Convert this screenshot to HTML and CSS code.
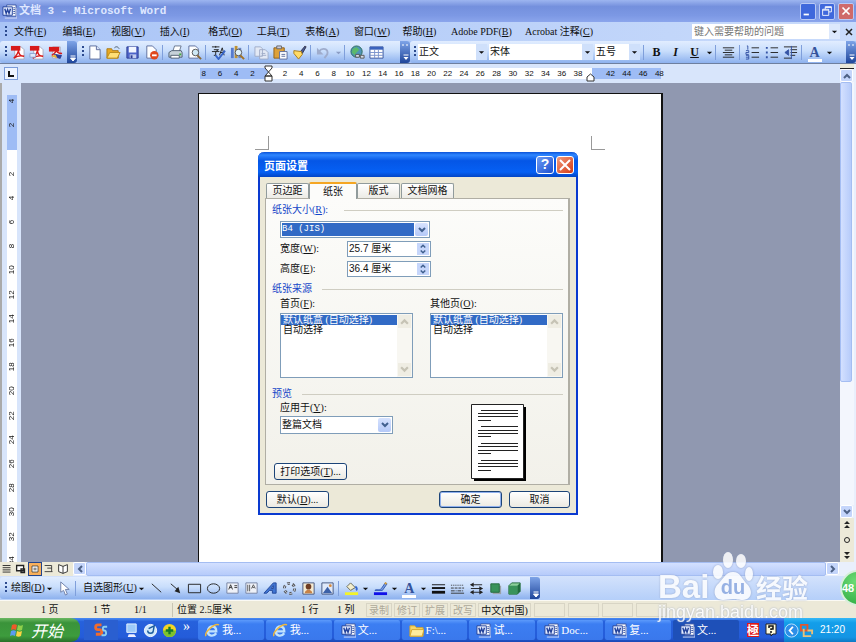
FILE: index.html
```html
<!DOCTYPE html>
<html lang="zh-CN">
<head>
<meta charset="utf-8">
<title>文档 3 - Microsoft Word</title>
<link rel="stylesheet" href="styles.css">
</head>
<body>
<svg class="defs" aria-hidden="true">
  <symbol id="word" viewBox="0 0 16 16"><path d="M5 1h10v12H5z" fill="#fff" stroke="#3a55a5"/><path d="M12 4h2M12 6h2M12 8h2M12 10h2" stroke="#3a55a5"/><path d="M1 3h10v9H1z" fill="#e4ecff" stroke="#23429a"/><path d="M3 5l1.500 5L6 6l1.500 4L9 5" fill="none" stroke="#23429a" stroke-width="1.500"/><path d="M3 15h13V4" fill="none" stroke="#d7def5"/></symbol>
  <symbol id="pdf" viewBox="0 0 16 16"><path d="M5 2h7l3 3v10H5z" fill="#fff" stroke="#aab"/><path d="M1 1h10v5H1z" fill="#d71a1a"/><path d="M4 14c3-3 5-6 5-9 0 4 2 7 6 7-3-1-8 0-11 2z" fill="none" stroke="#d71a1a" stroke-width="1.500"/></symbol>
  <symbol id="pdfm" viewBox="0 0 16 16"><path d="M5 2h7l3 3v10H5z" fill="#fff" stroke="#aab"/><path d="M1 1h10v5H1z" fill="#d71a1a"/><path d="M4 14c3-3 5-6 5-9 0 4 2 7 6 7-3-1-8 0-11 2z" fill="none" stroke="#d71a1a" stroke-width="1.500"/><path d="M1 9h6v4H1z" fill="#dfeafc" stroke="#8da4cf"/></symbol>
  <symbol id="pdfr" viewBox="0 0 16 16"><path d="M5 2h8v12H5z" fill="#fff" stroke="#aab"/><path d="M1 2h11v5H1z" fill="#d71a1a"/><path d="M4 11c3-2 5-4 5-6 0 3 2 4 6 4" fill="none" stroke="#d71a1a" stroke-width="1.500"/><path d="M6 9l9 2-2 4-5-2z" fill="#2c3f9a"/><path d="M3 12l5-2 2 4z" fill="#e6b23c"/></symbol>
  <symbol id="new" viewBox="0 0 16 16"><path d="M3 1h7l4 4v10H3z" fill="#fff" stroke="#5c6d9c"/><path d="M10 1v4h4" fill="#dce5fa" stroke="#5c6d9c"/></symbol>
  <symbol id="open" viewBox="0 0 16 16"><path d="M1 4h5l1 2h6v8H1z" fill="#e8a823" stroke="#a97a16"/><path d="M1 14l3-6h11l-3 6z" fill="#ffdf75" stroke="#b98a1d"/><path d="M9 3c2-2 4-1 5 1" fill="none" stroke="#456"/></symbol>
  <symbol id="save" viewBox="0 0 16 16"><path d="M2 2h12v12H2z" fill="#4d63c8" stroke="#2c3c93"/><path d="M4 2h8v6H4z" fill="#f2f6ff"/><path d="M5 10h7v4H5z" fill="#c3cdee"/><path d="M6 11h2v3H6z" fill="#2c3c93"/></symbol>
  <symbol id="perm" viewBox="0 0 16 16"><path d="M3 1h6l4 4v9H3z" fill="#fff" stroke="#5c6d9c"/><circle cx="11" cy="11" r="4.500" fill="#e0491f"/><path d="M8.500 11h5" stroke="#fff" stroke-width="2"/></symbol>
  <symbol id="print" viewBox="0 0 16 16"><path d="M5 7l2-6h7l-2 6z" fill="#fff" stroke="#66758e"/><path d="M1 8l3-2h10l1 2v5H1z" fill="#c7d2d9" stroke="#4f5f70"/><path d="M3 11h9v3H3z" fill="#fff" stroke="#4f5f70"/><path d="M12 9h2v2h-2z" fill="#3fae3f"/></symbol>
  <symbol id="preview" viewBox="0 0 16 16"><path d="M2 1h7l3 3v10H2z" fill="#fff" stroke="#5c6d9c"/><circle cx="9" cy="8" r="3.500" fill="#cfe9f5" stroke="#555"/><path d="M11 11l4 4" stroke="#8a6a39" stroke-width="2"/></symbol>
  <symbol id="spell" viewBox="0 0 16 16"><path d="M1 2h8M5 1v2M3 5h5L5 7v4H3M1 7h8M9 11l3-8 2 8M10 8h4" fill="none" stroke="#222"/><path d="M5 11l3 4 7-9" fill="none" stroke="#3765c8" stroke-width="2"/></symbol>
  <symbol id="research" viewBox="0 0 16 16"><path d="M1 3h3v11H1z" fill="#567bce"/><path d="M5 1h3v13H5z" fill="#be9234"/><path d="M9 3h3v11H9z" fill="#6a87c6"/><circle cx="9" cy="8" r="3.500" fill="#dff1fa" stroke="#555"/><path d="M11 11l4 4" stroke="#a47221" stroke-width="2"/></symbol>
  <symbol id="copy" viewBox="0 0 16 16"><path d="M1 2h6l2 2v8H1zM6 5h6l3 3v7H6z" fill="#e3e9f5" stroke="#a0acc8"/><path d="M8 9h4M8 11h5" stroke="#a0acc8"/></symbol>
  <symbol id="paste" viewBox="0 0 16 16"><path d="M1 3h11v11H1z" fill="#dda13a" stroke="#906019"/><path d="M4 1h5v3H4z" fill="#ccd" stroke="#666"/><path d="M7 7h8v8H7z" fill="#fff" stroke="#5c6d9c"/><path d="M9 10h4M9 12h4" stroke="#5c6d9c"/></symbol>
  <symbol id="brush" viewBox="0 0 16 16"><path d="M9 7l5-6 1 1-4 7z" fill="#445a9e" stroke="#334"/><path d="M2 6l8 1 1 3-4 5-5-6z" fill="#ffdb66" stroke="#a97a16"/></symbol>
  <symbol id="undo" viewBox="0 0 16 16"><path d="M3 7c4-5 11-3 9 3l-3 4" fill="none" stroke="#9faccc" stroke-width="2"/><path d="M1 3v7h7z" fill="#9faccc"/></symbol>
  <symbol id="link" viewBox="0 0 16 16"><circle cx="7" cy="7" r="6" fill="#4f94b9" stroke="#2b6a55"/><path d="M3 4l4-2 3 3-3 3-2 3-3-3z" fill="#5cb96a"/><path d="M6 10h4v3H6zM11 11h4v3h-4z" fill="#d7dde9" stroke="#555"/></symbol>
  <symbol id="table" viewBox="0 0 16 16"><path d="M1 2h14v12H1z" fill="#fff" stroke="#36539c"/><path d="M1 2h14v3H1z" fill="#3a62bd"/><path d="M1 8h14M1 11h14M6 5v9M10 5v9" stroke="#7b93cc"/></symbol>
  <symbol id="center" viewBox="0 0 16 16"><path d="M2 3h12M4 5.500h8M2 8h12M4 10.500h8M2 13h12" stroke="#222"/></symbol>
  <symbol id="numlist" viewBox="0 0 16 16"><path d="M7 3h8M7 8h8M7 13h8" stroke="#222"/><path d="M2 1h1v4M1 6h3v2H1v2h3M1 11h3v4H1M1 13h3" fill="none" stroke="#3554a5"/></symbol>
  <symbol id="bullist" viewBox="0 0 16 16"><path d="M7 3h8M7 8h8M7 13h8" stroke="#222"/><path d="M2 2h2v2H2zM2 7h2v2H2zM2 12h2v2H2z" fill="#3554a5"/></symbol>
  <symbol id="indent" viewBox="0 0 16 16"><path d="M1 2h14M8 5h7M8 8h7M8 11h5M1 14h8" stroke="#222"/><path d="M6 5v6L2 8zM9 1v14" fill="#3554a5" stroke="#3554a5"/></symbol>
  <symbol id="up" viewBox="0 0 8 8"><path d="M1 6l3-3 3 3" fill="none" stroke="currentColor" stroke-width="2"/></symbol>
  <symbol id="down" viewBox="0 0 8 8"><path d="M1 2l3 3 3-3" fill="none" stroke="currentColor" stroke-width="2"/></symbol>
  <symbol id="left" viewBox="0 0 8 8"><path d="M6 1L3 4l3 3" fill="none" stroke="currentColor" stroke-width="2"/></symbol>
  <symbol id="right" viewBox="0 0 8 8"><path d="M2 1l3 3-3 3" fill="none" stroke="currentColor" stroke-width="2"/></symbol>
  <symbol id="tri" viewBox="0 0 8 8"><path d="M1 3h6L4 6z" fill="currentColor"/></symbol>
  <symbol id="cap" viewBox="0 0 9 22"><path d="M3 15h5M3 17h5l-2.500 3z" fill="#fff" stroke="#fff"/></symbol>
  <symbol id="cap2" viewBox="0 0 9 22"><path d="M2 3l1 1-1 1M6 3l1 1-1 1M3 14h5" fill="none" stroke="#fff"/><path d="M3 16h5l-2.500 3z" fill="#fff"/></symbol>
  <symbol id="cursor" viewBox="0 0 16 16"><path d="M4 1v11l3-2 2 5 2-1-2-5h4z" fill="#fff" stroke="#6d7ea8"/></symbol>
  <symbol id="line" viewBox="0 0 16 16"><path d="M3 3l10 9" stroke="#222"/></symbol>
  <symbol id="arrow" viewBox="0 0 16 16"><path d="M3 3l7 6" stroke="#222"/><path d="M13 13L7 11l4-5z" fill="#222"/></symbol>
  <symbol id="rect" viewBox="0 0 16 16"><path d="M1.500 3.500h13v9h-13z" fill="none" stroke="#222"/></symbol>
  <symbol id="oval" viewBox="0 0 16 16"><ellipse cx="8" cy="8" rx="6.500" ry="5" fill="none" stroke="#222"/></symbol>
  <symbol id="tbox" viewBox="0 0 16 16"><path d="M2 2h12v11H2z" fill="#eef1f8" stroke="#7582a2"/><path d="M4 9l2-5 2 5M5 7h2M10 5h3M10 7h3" fill="none" stroke="#333"/></symbol>
  <symbol id="vbox" viewBox="0 0 16 16"><path d="M2 2h12v11H2z" fill="#eef1f8" stroke="#7582a2"/><path d="M4 4v7M6 4v7M8 8l2-4 2 4M9 7h2" fill="none" stroke="#555"/></symbol>
  <symbol id="wart" viewBox="0 0 16 16"><path d="M1 13L11 2h3v11h-4v-3H7l-3 3zM9 8h2V5z" fill="#3f74d2" stroke="#22489a"/></symbol>
  <symbol id="diag" viewBox="0 0 16 16"><circle cx="8" cy="8" r="5.500" fill="none" stroke="#555" stroke-width="3" stroke-dasharray="3 2.700"/><circle cx="8" cy="8" r="5.500" fill="none" stroke="#c9d5ee" stroke-dasharray="3 2.700"/></symbol>
  <symbol id="clip" viewBox="0 0 16 16"><path d="M2 2h12v12H2z" fill="#f4ead2" stroke="#44567e"/><circle cx="8" cy="6" r="3" fill="#6e3d24"/><path d="M4 13c0-5 8-5 8 0z" fill="#c78247"/></symbol>
  <symbol id="pic" viewBox="0 0 16 16"><path d="M2 2h12v12H2z" fill="#dfe9fa" stroke="#44567e"/><path d="M3 13l5-7 5 7z" fill="#3c61a8"/><circle cx="11" cy="5" r="1.500" fill="#d78a3a"/></symbol>
  <symbol id="fill" viewBox="0 0 16 16"><path d="M3 6l4-4 5 5-5 3z" fill="#f4efcd" stroke="#665"/><path d="M12 6c2 1 2 3 1 4" fill="none" stroke="#36c" stroke-width="2"/><path d="M1 12h14v3H1z" fill="#f3f32a"/></symbol>
  <symbol id="pen" viewBox="0 0 16 16"><path d="M2 10c3-2 4 1 7-2l4-6 2 1-5 7z" fill="#7ba0e0" stroke="#3159b4"/><path d="M12 3l2 1 1-2-2-1z" fill="#d8a13a"/><path d="M1 12h14v3H1z" fill="#1010e8"/></symbol>
  <symbol id="lines" viewBox="0 0 16 16"><path d="M1 4h14" stroke="#111"/><path d="M1 7.500h14" stroke="#111" stroke-width="2"/><path d="M1 12h14" stroke="#111" stroke-width="3"/></symbol>
  <symbol id="dash" viewBox="0 0 16 16"><path d="M1 4.500h14" stroke="#333" stroke-dasharray="1 1"/><path d="M1 7.500h14" stroke="#333" stroke-dasharray="3 1"/><path d="M1 10.500h14" stroke="#333" stroke-dasharray="4 1 1 1"/><path d="M1 13h14" stroke="#333"/></symbol>
  <symbol id="arrs" viewBox="0 0 16 16"><path d="M2 4h12M2 8h12M2 12h12" stroke="#222"/><path d="M5 1.500v5L1 4zM11 5.500v5l4-2.500zM5 9.500v5L1 12zM11 9.500v5l4-2.500z" fill="#222"/></symbol>
  <symbol id="shadow" viewBox="0 0 16 16"><path d="M5 5h9v9H5z" fill="#9aa2a8"/><path d="M3 3h9v9H3z" fill="#39935a" stroke="#226b3c"/></symbol>
  <symbol id="cube" viewBox="0 0 16 16"><path d="M2 5l3-3h9v9l-3 3H2z" fill="#8ccf9a" stroke="#226b3c"/><path d="M2 5h9v9H2z" fill="#39935a"/><path d="M11 5l3-3v9l-3 3z" fill="#206d3d"/></symbol>
  <symbol id="ie" viewBox="0 0 16 16"><path d="M3 9h9c0-7-8-7-9 0 0 5 6 6 9 2" fill="none" stroke="#bfe2ff" stroke-width="2.500"/><path d="M1 14c-2-4 9-14 14-12" fill="none" stroke="#f1b93b" stroke-width="1.500"/></symbol>
  <symbol id="folder" viewBox="0 0 16 16"><path d="M1 3h5l2 2h7v9H1z" fill="#f8d768" stroke="#d6a62d"/><path d="M1 14l2-7h13l-2 7z" fill="#ffec9d" stroke="#d6a62d"/></symbol>
</svg>

<header class="titlebar">
  <svg class="i"><use href="#word"/></svg>
  <h1>文档 3 - Microsoft Word</h1>
  <div class="winbtns">
    <button aria-label="最小化"><svg viewBox="0 0 16 16"><path d="M3 11h6v2H3z" fill="#fff"/></svg></button>
    <button aria-label="还原"><svg viewBox="0 0 16 16"><path d="M6 6V3h7v6h-3M3 6h7v7H3zM3 7h7M6 4h7" fill="none" stroke="#fff"/></svg></button>
    <button class="close" aria-label="关闭"><svg viewBox="0 0 16 16"><path d="M4 4l8 8M12 4l-8 8" stroke="#fff" stroke-width="2"/></svg></button>
  </div>
</header>

<nav class="menubar">
  <span class="grip"></span>
  <div class="menus">
    <button>文件(<u>F</u>)</button><button>编辑(<u>E</u>)</button><button>视图(<u>V</u>)</button><button>插入(<u>I</u>)</button><button>格式(<u>O</u>)</button><button>工具(<u>T</u>)</button><button>表格(<u>A</u>)</button><button>窗口(<u>W</u>)</button><button>帮助(<u>H</u>)</button>
  </div>
  <button class="wide">Adobe PDF(<u>B</u>)</button><button>Acrobat 注释(<u>C</u>)</button>
  <div class="ask"><input aria-label="帮助问题" placeholder="键入需要帮助的问题"><svg class="s"><use href="#tri"/></svg></div>
  <button class="docx" aria-label="关闭文档"><svg viewBox="0 0 8 8"><path d="M1 1l6 6M7 1L1 7" stroke="#222" stroke-width="1.500"/></svg></button>
</nav>

<div class="toolbar">
  <div class="tb tb-pdf">
    <span class="grip"></span>
    <button aria-label="PDF"><svg class="i"><use href="#pdf"/></svg></button><button aria-label="PDF 邮件"><svg class="i"><use href="#pdfm"/></svg></button><button aria-label="PDF 审阅"><svg class="i"><use href="#pdfr"/></svg></button>
    <svg class="cap"><use href="#cap"/></svg>
  </div>
  <div class="tb tb-std">
    <span class="grip"></span>
    <button aria-label="新建"><svg class="i"><use href="#new"/></svg></button><button aria-label="打开"><svg class="i"><use href="#open"/></svg></button><button aria-label="保存"><svg class="i"><use href="#save"/></svg></button><button aria-label="权限"><svg class="i"><use href="#perm"/></svg></button>
    <i class="sep"></i>
    <button aria-label="打印"><svg class="i"><use href="#print"/></svg></button><button aria-label="打印预览"><svg class="i"><use href="#preview"/></svg></button>
    <i class="sep"></i>
    <button aria-label="拼写"><svg class="i"><use href="#spell"/></svg></button><button aria-label="信息检索"><svg class="i"><use href="#research"/></svg></button>
    <i class="sep"></i>
    <button aria-label="复制"><svg class="i"><use href="#copy"/></svg></button><button aria-label="粘贴"><svg class="i"><use href="#paste"/></svg></button><button aria-label="格式刷"><svg class="i"><use href="#brush"/></svg></button>
    <i class="sep"></i>
    <button aria-label="撤消"><svg class="i"><use href="#undo"/></svg></button><button class="dd dim" aria-label="撤消列表"><svg class="s"><use href="#tri"/></svg></button>
    <i class="sep"></i>
    <button aria-label="超链接"><svg class="i"><use href="#link"/></svg></button><button aria-label="表格"><svg class="i"><use href="#table"/></svg></button>
    <svg class="cap"><use href="#cap2"/></svg>
  </div>
  <div class="tb tb-fmt">
    <span class="grip"></span>
    <div class="combo c-style"><select aria-label="样式"><option>正文</option></select><svg class="s"><use href="#tri"/></svg></div>
    <div class="combo c-font"><select aria-label="字体"><option>宋体</option></select><svg class="s"><use href="#tri"/></svg></div>
    <div class="combo c-size"><select aria-label="字号"><option>五号</option></select><svg class="s"><use href="#tri"/></svg></div>
    <i class="sep"></i>
    <button class="g"><b>B</b></button><button class="g"><em>I</em></button><button class="g"><u>U</u></button><button class="dd" aria-label="下划线样式"><svg class="s"><use href="#tri"/></svg></button>
    <i class="sep"></i>
    <button aria-label="居中"><svg class="i"><use href="#center"/></svg></button>
    <i class="sep"></i>
    <button aria-label="编号"><svg class="i"><use href="#numlist"/></svg></button><button aria-label="项目符号"><svg class="i"><use href="#bullist"/></svg></button><button aria-label="缩进"><svg class="i"><use href="#indent"/></svg></button>
    <i class="sep"></i>
    <button class="color">A</button><button class="dd" aria-label="字体颜色"><svg class="s"><use href="#tri"/></svg></button>
    <svg class="cap"><use href="#cap2"/></svg>
  </div>
</div>

<main class="work">
  <div class="canvas">
    <div class="hrow">
      <span class="tabsel"><svg viewBox="0 0 12 11"><path d="M4 3v5h5" fill="none" stroke="#111" stroke-width="2"/></svg></span>
      <div class="hruler">
        <span>8</span><span>6</span><span>4</span><span>2</span><span><svg class="mark" viewBox="0 0 9 17"><path d="M1 1h7v2L4.500 7 1 3zM4.500 7L8 11H1zM1 11h7v5H1z" fill="#fff" stroke="#333"/></svg></span><span>2</span><span>4</span><span>6</span><span>8</span><span>10</span><span>12</span><span>14</span><span>16</span><span>18</span><span>20</span><span>22</span><span>24</span><span>26</span><span>28</span><span>30</span><span>32</span><span>34</span><span>36</span><span>38</span><span class="rt"><svg class="mark" viewBox="0 0 9 17"><path d="M1 16v-4l3.500-3L8 12v4z" fill="#fff" stroke="#333"/></svg></span><span>42</span><span>44</span><span>46</span><span>48</span>
      </div>
    </div>
    <div class="vrow">
      <div class="vruler">
        <div class="vnums"><span>4</span><span>2</span><span></span><span>2</span><span>4</span><span>6</span><span>8</span><span>10</span><span>12</span><span>14</span><span>16</span><span>18</span><span>20</span><span>22</span><span>24</span><span>26</span><span>28</span><span>30</span><span>32</span><span>34</span></div>
      </div>
      <div class="desk"><div class="sheet"><i class="crop tl"></i><i class="crop tr"></i></div></div>
    </div>
  </div>
  <div class="vscroll">
    <i class="split"></i>
    <button aria-label="向上"><svg class="s"><use href="#up"/></svg></button>
    <div class="vtrack"><div class="vthumb"></div></div>
    <button aria-label="向下"><svg class="s"><use href="#down"/></svg></button>
    <div class="browse"><svg viewBox="0 0 8 10"><path d="M1 4l3-3 3 3zM1 8l3-3 3 3z" fill="#222"/></svg><svg viewBox="0 0 8 10"><circle cx="4" cy="5" r="2.500" fill="none" stroke="#222"/></svg><svg viewBox="0 0 8 10"><path d="M1 2l3 3 3-3zM1 6l3 3 3-3z" fill="#222"/></svg></div>
  </div>

  <section class="dialog" role="dialog" aria-labelledby="dt">
    <header><h2 id="dt">页面设置</h2><button aria-label="帮助">?</button><button class="close" aria-label="关闭"><svg viewBox="0 0 16 16"><path d="M3 3l10 10M13 3L3 13" stroke="#fff" stroke-width="2"/></svg></button></header>
    <div class="dbody">
      <div class="tabs" role="tablist"><button role="tab">页边距</button><button role="tab" class="on" aria-selected="true">纸张</button><button role="tab">版式</button><button role="tab">文档网格</button></div>
      <div class="panel">
        <div class="sect first"><label for="psize">纸张大小(<u>R</u>):</label><i></i></div>
        <div class="xp psize"><select id="psize"><option>B4 (JIS)</option></select><span><svg class="s"><use href="#down"/></svg></span></div>
        <div class="field"><label for="w">宽度(<u>W</u>):</label><div class="spin"><input id="w" value="25.7 厘米"><span><svg class="s"><use href="#up"/></svg><svg class="s"><use href="#down"/></svg></span></div></div>
        <div class="field"><label for="h">高度(<u>E</u>):</label><div class="spin"><input id="h" value="36.4 厘米"><span><svg class="s"><use href="#up"/></svg><svg class="s"><use href="#down"/></svg></span></div></div>
        <div class="sect"><span>纸张来源</span><i></i></div>
        <div class="lists">
          <div><span id="l1">首页(<u>F</u>):</span><div class="lb"><ul role="listbox" aria-labelledby="l1"><li role="option" aria-selected="true">默认纸盒 (自动选择)</li><li role="option">自动选择</li></ul><div class="sb"><svg class="s"><use href="#up"/></svg><svg class="s"><use href="#down"/></svg></div></div></div>
          <div><span id="l2">其他页(<u>O</u>):</span><div class="lb"><ul role="listbox" aria-labelledby="l2"><li role="option" aria-selected="true">默认纸盒 (自动选择)</li><li role="option">自动选择</li></ul><div class="sb"><svg class="s"><use href="#up"/></svg><svg class="s"><use href="#down"/></svg></div></div></div>
        </div>
        <div class="sect prev"><span>预览</span><i></i></div>
        <div class="apply">
          <div class="acol">
            <label for="ap">应用于(<u>Y</u>):</label>
            <div class="xp ap"><select id="ap"><option>整篇文档</option></select><span><svg class="s"><use href="#down"/></svg></span></div>
            <button class="btn popt">打印选项(<u>T</u>)...</button>
          </div>
          <svg class="mini" viewBox="0 0 55 77"><path d="M3 3h52v74H3z" fill="#000"/><path d="M.5.5h52v74H.5z" fill="#fff" stroke="#222"/><path d="M10 6.500h37M7 9.500h40M7 12.500h40M7 16.500h13M10 22.500h37M7 26.500h40M7 29.500h40M7 32.500h13M10 39.500h37M7 42.500h40M7 46.500h40M7 49.500h13M10 56.500h37M7 59.500h40M7 62.500h40M7 66.500h13" stroke="#222"/></svg>
        </div>
      </div>
      <footer><button class="btn">默认(<u>D</u>)...</button><button class="btn ok">确定</button><button class="btn cancel">取消</button></footer>
    </div>
  </section>
</main>

<div class="hscroll">
  <div class="views">
    <svg viewBox="0 0 16 16"><path d="M3 4h9M3 6.500h9M3 9h9M3 11.500h9" stroke="#222"/></svg><svg viewBox="0 0 16 16"><path d="M3 4h8v6H3zM8 8h4v4H8z" fill="#fff" stroke="#222" stroke-width="1.500"/></svg><svg class="on" viewBox="0 0 16 16"><path d="M4 4h8v8H4z" fill="#fff" stroke="#333"/><path d="M6 7h4M6 9h4" stroke="#333"/></svg><svg viewBox="0 0 16 16"><path d="M3 4h8M6 7h5M3 11h9M11 4v7" stroke="#333"/></svg><svg viewBox="0 0 16 16"><path d="M8 5v8M8 5L3 3v8l5 2 5-2V3z" fill="#fff" stroke="#222"/></svg>
  </div>
  <button aria-label="向左"><svg class="s"><use href="#left"/></svg></button>
  <div class="hthumb"></div>
  <button aria-label="向右"><svg class="s"><use href="#right"/></svg></button>
</div>

<div class="drawbar">
  <div class="tb tb-draw">
    <span class="grip"></span>
    <button class="t">绘图(<u>D</u>)</button><button class="dd" aria-label="绘图菜单"><svg class="s"><use href="#tri"/></svg></button><button aria-label="选择"><svg class="i"><use href="#cursor"/></svg></button>
    <i class="sep"></i>
    <button class="t">自选图形(<u>U</u>)</button><button class="dd" aria-label="图形菜单"><svg class="s"><use href="#tri"/></svg></button>
    <button aria-label="直线"><svg class="i"><use href="#line"/></svg></button><button aria-label="箭头"><svg class="i"><use href="#arrow"/></svg></button><button aria-label="矩形"><svg class="i"><use href="#rect"/></svg></button><button aria-label="椭圆"><svg class="i"><use href="#oval"/></svg></button><button aria-label="文本框"><svg class="i"><use href="#tbox"/></svg></button><button aria-label="竖排文本框"><svg class="i"><use href="#vbox"/></svg></button><button aria-label="艺术字"><svg class="i"><use href="#wart"/></svg></button><button aria-label="图示"><svg class="i"><use href="#diag"/></svg></button><button aria-label="剪贴画"><svg class="i"><use href="#clip"/></svg></button><button aria-label="图片"><svg class="i"><use href="#pic"/></svg></button>
    <i class="sep"></i>
    <button aria-label="填充"><svg class="i"><use href="#fill"/></svg></button><button class="dd" aria-label="填充颜色"><svg class="s"><use href="#tri"/></svg></button><button aria-label="线条"><svg class="i"><use href="#pen"/></svg></button><button class="dd" aria-label="线条颜色"><svg class="s"><use href="#tri"/></svg></button><button class="color">A</button><button class="dd" aria-label="文字颜色"><svg class="s"><use href="#tri"/></svg></button>
    <button aria-label="线型"><svg class="i"><use href="#lines"/></svg></button><button aria-label="虚线"><svg class="i"><use href="#dash"/></svg></button><button aria-label="箭头样式"><svg class="i"><use href="#arrs"/></svg></button><button aria-label="阴影"><svg class="i"><use href="#shadow"/></svg></button><button aria-label="三维"><svg class="i"><use href="#cube"/></svg></button>
    <svg class="cap"><use href="#cap"/></svg>
  </div>
</div>

<div class="status">
  <span class="p1">1 页</span><span class="p2">1 节</span><span class="p3">1/1</span><span class="p4">位置 2.5厘米</span><span class="p5">1 行</span><span class="p6">1 列</span>
  <span class="m">录制</span><span class="m">修订</span><span class="m">扩展</span><span class="m">改写</span><span class="lang">中文(中国)</span><span class="e"></span><span class="e"></span><span class="e"></span><span class="e"></span>
</div>

<footer class="taskbar">
  <button class="start"><svg viewBox="0 0 16 16"><path d="M2 3c2-1 3-1 5 0L6 8c-2-1-3-1-5 0z" fill="#ee5a2a"/><path d="M8 3c2 1 3 1 5 0l-1 5c-2 1-3 1-5 0z" fill="#8fd04b"/><path d="M1 9c2-1 3-1 5 0l-1 5c-2-1-3-1-5 0z" fill="#5a9bf0"/><path d="M7 9c2 1 3 1 5 0l-1 5c-2 1-3 1-5 0z" fill="#fbd442"/></svg>开始</button>
  <div class="quick">
    <button class="big" aria-label="输入法"><svg class="i" viewBox="0 0 16 16"><path d="M8 2H4c-3 0-3 5 0 5h2c3 0 3 5 0 5H2" fill="none" stroke="#f26b2c" stroke-width="3"/><path d="M14 4h-3c-2 0-2 4 0 4s3 5 0 5H8" fill="none" stroke="#8bd0f0" stroke-width="2"/></svg></button>
    <button aria-label="显示桌面"><svg class="i" viewBox="0 0 16 16"><path d="M3 1h10v9H3z" fill="#9ccaf9" stroke="#e8f3ff"/><path d="M5 12h6l2 3H4z" fill="#eef"/></svg></button><button aria-label="播放器"><svg class="i" viewBox="0 0 16 16"><circle cx="8" cy="8" r="6.500" fill="#cfe8fb" stroke="#fff"/><path d="M5 8a3 3 0 106 0M6 6l6-3-1 5" fill="none" stroke="#1a5b9e" stroke-width="1.500"/></svg></button><button aria-label="安全卫士"><svg class="i" viewBox="0 0 16 16"><circle cx="8" cy="8" r="7" fill="#f3d526"/><path d="M1 8a7 7 0 0014 0z" fill="#7dc32d"/><path d="M8 4v8M4 8h8" stroke="#147a2a" stroke-width="2.500"/></svg></button><span>»</span>
  </div>
  <div class="tasks">
    <button><svg class="i"><use href="#ie"/></svg>我...</button><button><svg class="i"><use href="#ie"/></svg>我...</button><button><svg class="i"><use href="#word"/></svg>文...</button><button><svg class="i"><use href="#folder"/></svg>F:\...</button><button><svg class="i"><use href="#word"/></svg>试...</button><button><svg class="i"><use href="#word"/></svg>Doc...</button><button><svg class="i"><use href="#word"/></svg>复...</button><button class="on"><svg class="i"><use href="#word"/></svg>文...</button>
  </div>
  <div class="ime"><span>極</span><svg viewBox="0 0 12 14"><path d="M1 1h10v10H8l-2 2v-2H1z" fill="#fffbe0" stroke="#222"/><path d="M4 5V3h4v3H6v1M6 8v2" fill="none" stroke="#111" stroke-width="1.500"/></svg></div>
  <div class="tray"><svg class="i" viewBox="0 0 16 16"><circle cx="8" cy="8" r="7" fill="#2d8fe8" stroke="#bfe4ff"/><path d="M9.500 4L6 8l3.500 4" fill="none" stroke="#fff" stroke-width="2"/></svg><svg class="i" viewBox="0 0 16 16"><path d="M2 2h7v6H2z" fill="none" stroke="#e2572e" stroke-width="2"/><path d="M5 6v8h8M9 8h5v4" fill="none" stroke="#e8c07a" stroke-width="2"/></svg><time>21:20</time></div>
</footer>

<div class="wm" aria-hidden="true">
  <div class="wm-row"><b>Bai</b>
    <div class="paw"><svg viewBox="0 0 40 50"><g fill="#fff"><ellipse cx="5" cy="20" rx="5" ry="7"/><ellipse cx="15" cy="8" rx="5" ry="8"/><ellipse cx="28" cy="9" rx="5" ry="7"/><ellipse cx="36" cy="22" rx="4" ry="7"/><path d="M20 20c8 0 9 8 15 13 6 8 2 15-5 15-5 0-6-1-10-1s-6 1-10 1c-8 0-11-8-6-15 6-5 8-13 16-13z"/></g></svg><span>du</span></div>
    <strong>经验</strong></div>
  <div class="wm-url">jingyan.baidu.com</div>
</div>
<div class="ball">48</div>
</body>
</html>
```
FILE: styles.css
```css
* { box-sizing: border-box; }
body {
  margin: 0;
  min-height: 100vh;
  display: flex;
  flex-direction: column;
  position: relative;
  overflow: hidden;
  font: 10px/14px "Liberation Serif", "Noto Sans CJK SC", serif;
  color: #111;
  background: #d9e6fc;
}
button, input, select {
  font: inherit;
  color: inherit;
  margin: 0;
  padding: 0;
  border: 0;
  background: none;
  border-radius: 0;
}
button { white-space: nowrap; }
svg { display: block; flex: none; }
h1, h2, ul { margin: 0; padding: 0; list-style: none; }
.defs { position: absolute; width: 0; height: 0; }
.i { width: 15px; height: 15px; }
.s { width: 8px; height: 8px; }

.titlebar {
  height: 22px;
  flex: none;
  display: flex;
  align-items: center;
  padding: 0 2px;
  background: linear-gradient(#9db5f0, #7490dd 30%, #7c98e4 70%, #8ba5ec);
}
.titlebar h1 {
  flex: 1;
  margin-left: 2px;
  color: #dfe7ff;
  font: bold 11px/20px "Liberation Mono", "Noto Sans CJK SC", monospace;
}
.winbtns { display: flex; gap: 3px; }
.winbtns button {
  width: 16px;
  height: 17px;
  border: 1px solid #b9c9f5;
  border-radius: 2px;
  background: #3f68dc;
}
.winbtns .close { background: #cf6a6a; }

.menubar {
  height: 19px;
  flex: none;
  display: flex;
  align-items: center;
  padding: 0 3px 0 5px;
  background: linear-gradient(90deg, #a9c4f6, #c9dbfb);
}
.grip {
  width: 2px;
  height: 12px;
  flex: none;
  background: repeating-linear-gradient(#2c4a8e 0 2px, transparent 2px 4px);
}
.menus {
  display: grid;
  grid-template-columns: repeat(9, 1fr);
  width: 437px;
  margin-left: 7px;
}
.menubar button { text-align: left; }
.menubar .wide { width: 74px; }
.ask {
  display: flex;
  align-items: center;
  width: 148px;
  height: 15px;
  margin-left: auto;
  background: #fff;
}
.ask input { flex: 1; min-width: 0; padding-left: 2px; }
.ask input::placeholder { color: #777; opacity: 1; }
.ask .s { width: 11px; padding: 2px; background: #dce8fc; height: 15px; }
.menubar .docx { width: 8px; height: 8px; margin-left: 5px; }

.toolbar, .drawbar {
  flex: none;
  display: flex;
  background: #a9c5f8;
}
.toolbar { height: 23px; border-bottom: 1px solid #6e7f9f; }
.tb {
  display: flex;
  align-items: center;
  height: 22px;
  background: linear-gradient(#e1edff, #c9defc 45%, #8db1ee);
  border-radius: 3px;
}
.tb > button {
  width: 19px;
  height: 20px;
  flex: none;
  display: flex;
  align-items: center;
  justify-content: center;
}
.tb > button.dd { width: 10px; }
.tb > button.dd .s { width: 7px; height: 7px; }
.tb > button.dim { color: #8b9cc4; }
.tb > button.t { width: auto; }
.tb > button.g { font-size: 12px; font-weight: bold; }
.tb > .color {
  font: bold 14px/13px "Liberation Serif", serif;
  color: #34539b;
}
.color { background: linear-gradient(#fff, #fff) 50% 17px / 14px 3px no-repeat; }
.sep { width: 5px; height: 15px; flex: none; border-left: 1px solid #7f9fdb; margin-left: 1px; margin-right: -1px; }
.cap {
  width: 10px;
  height: 22px;
  margin-left: auto;
  background: linear-gradient(#7ea4e8, #1f469b);
  border-radius: 0 3px 3px 0;
}
.tb-pdf { width: 77px; padding-left: 5px; }
.tb-std { width: 333px; padding-left: 5px; }
.tb-fmt { flex: 1; padding-left: 4px; }
.tb-std .grip, .tb-pdf .grip { margin-right: 1px; }
.combo {
  position: relative;
  height: 16px;
  margin-left: 2px;
  background: #fff;
}
.combo select, .xp select {
  width: 100%;
  height: 100%;
  display: block;
  appearance: none;
  padding-left: 1px;
}
.combo .s {
  position: absolute;
  right: 0;
  top: 0;
  width: 11px;
  height: 16px;
  padding: 2px;
  background: #cfe0fb;
  pointer-events: none;
}
.c-style { width: 69px; }
.c-font { width: 104px; }
.c-size { width: 45px; margin-right: 2px; }

.work {
  flex: 1;
  min-height: 0;
  display: flex;
  position: relative;
}
.canvas { flex: 1; display: flex; flex-direction: column; }
.hrow {
  height: 19px;
  flex: none;
  position: relative;
  display: flex;
  justify-content: center;
  align-items: center;
  padding-left: 23px;
  background: #d8e5fb;
}
.tabsel {
  position: absolute;
  left: 4px;
  top: 3px;
  width: 14px;
  height: 13px;
  border: 1px solid #7b9cd9;
  background: #eef4ff;
}
.hruler {
  display: grid;
  grid-template-columns: repeat(29, 1fr);
  width: 472px;
  height: 11px;
  font: 8px/11px "Liberation Sans", sans-serif;
  text-align: center;
  background: linear-gradient(90deg, transparent 4px, #9ebcf5 4px 72px, #fff 72px 396px, #9ebcf5 396px 465px, transparent 465px);
}
.mark { width: 9px; height: 17px; margin: -3px auto 0; }
.rt .mark { margin-left: 0; }
.vrow { flex: 1; min-height: 0; display: flex; }
.vruler {
  width: 21px;
  flex: none;
  padding: 6px 4px 0 5px;
  background: #d8e5fb;
  border-left: 2px solid #aaa;
  overflow: hidden;
}
.vnums {
  display: grid;
  grid-template-rows: repeat(20, 1fr);
  height: 484px;
  margin-bottom: -40px;
  justify-content: center;
  font: 8px/10px "Liberation Sans", sans-serif;
  text-align: center;
  background: linear-gradient(#d8e5fb 6px, #9ebcf5 6px 61px, #fff 61px);
}
.vnums span { writing-mode: vertical-rl; transform: rotate(180deg); }
.desk {
  flex: 1;
  display: flex;
  justify-content: center;
  padding-top: 10px;
  background: #9098b0;
}
.sheet {
  position: relative;
  width: 465px;
  background: #fff;
  border: 1px solid #111;
  border-right-width: 2px;
  border-bottom: 0;
}
.crop {
  position: absolute;
  top: 42px;
  width: 14px;
  height: 14px;
  border: 0 solid #999;
  border-bottom-width: 1px;
}
.tl { left: 56px; border-right-width: 1px; }
.tr { right: 56px; border-left-width: 1px; }

.vscroll {
  width: 16px;
  flex: none;
  display: flex;
  flex-direction: column;
  padding-right: 2px;
  background: #e9effc;
}
.split { height: 5px; border-bottom: 1px solid #222; background: #ece9d8; }
.vscroll button, .hscroll button {
  width: 13px;
  height: 13px;
  display: flex;
  align-items: center;
  justify-content: center;
  color: #4d6185;
  border: 1px solid #fff;
  border-radius: 2px;
  background: #c4d5fb;
}
.vtrack { flex: 1; background: #f3f6fd; }
.vthumb {
  width: 12px;
  height: 71%;
  border: 1px solid #a4bdf2;
  border-radius: 2px;
  background: linear-gradient(90deg, #d3e0ff, #b6cbfa);
}
.browse {
  height: 44px;
  display: flex;
  flex-direction: column;
  justify-content: space-around;
  align-items: center;
  background: #ece9d8;
}
.browse svg { width: 8px; height: 10px; }

.dialog {
  position: absolute;
  left: calc(50% - 170px);
  top: 88px;
  width: 320px;
  background: #ece9d8;
  border: 2px solid #0a3ad0;
  border-top: 0;
  border-radius: 6px 6px 0 0;
}
.dialog > header {
  height: 25px;
  display: flex;
  align-items: center;
  gap: 2px;
  margin: 0 -2px;
  padding: 0 4px 0 6px;
  border-radius: 6px 6px 0 0;
  background: linear-gradient(#0a52d8, #2f86ff 12%, #0556e6 35%, #0660f4 80%, #0345c4);
}
.dialog h2 { flex: 1; color: #fff; font: bold 11px/20px "Noto Sans CJK SC", sans-serif; }
.dialog > header button {
  width: 18px;
  height: 18px;
  border: 1px solid #fff;
  border-radius: 3px;
  background: linear-gradient(135deg, #6d9bf4, #1d50d0);
  color: #fff;
  font: bold 14px/15px "Liberation Sans", sans-serif;
}
.dialog > header .close { background: linear-gradient(135deg, #f09a7c, #d53a14); }
.dbody { padding: 5px 6px 5px 5px; }
.tabs { display: flex; align-items: flex-end; padding-left: 1px; }
.tabs button {
  height: 15px;
  width: 43px;
  border: 1px solid #919b9c;
  border-bottom: 0;
  border-radius: 2px 2px 0 0;
  background: linear-gradient(#fff, #ecebe5);
}
.tabs .on {
  height: 17px;
  width: 48px;
  margin-bottom: -1px;
  border-top: 2px solid #f5a623;
  background: #fcfcfa;
  z-index: 1;
}
.tabs button:nth-child(4) { width: 53px; margin-left: 1px; }
.panel {
  border: 1px solid #b0aea4;
  border-right-width: 2px;
  padding: 4px 5px 3px 6px;
  background: linear-gradient(#fcfcfa, #f2f1ea);
}
.sect { display: flex; align-items: center; gap: 10px; margin-top: 5px; height: 14px; color: #1546c8; }
.sect i { flex: 1; border-top: 1px solid #cfcdc2; }
.sect.first { margin-top: 0; gap: 16px; }
.sect.prev { margin-top: 9px; }
.xp { position: relative; height: 17px; background: #fff; border: 1px solid #7f9db9; }
.xp span {
  position: absolute;
  right: 1px;
  top: 1px;
  bottom: 1px;
  width: 13px;
  display: flex;
  align-items: center;
  justify-content: center;
  color: #41608f;
  border-radius: 2px;
  background: linear-gradient(#d6e2fe, #b5c9f8);
  pointer-events: none;
}
.psize { width: 150px; margin: 4px 0 2px 8px; }
.psize select {
  padding: 1px 15px 1px 1px;
  background: #316ac5 content-box;
  color: #fff;
  font: 9px/13px "Liberation Mono", monospace;
}
.field { display: flex; align-items: center; margin: 0 0 3px 8px; height: 17px; }
.field label { width: 67px; }
.spin {
  display: flex;
  width: 84px;
  height: 16px;
  border: 1px solid #7f9db9;
  background: #fff;
}
.spin input { flex: 1; min-width: 0; padding-left: 1px; font-family: "Liberation Sans", "Noto Sans CJK SC", sans-serif; }
.spin span { width: 14px; padding: 1px; color: #41608f; }
.spin .s { width: 12px; height: 6px; background: #c6d6fb; }
.lists { display: grid; grid-template-columns: 133px 133px; gap: 17px; margin: 1px 0 0 8px; }
.lb {
  display: flex;
  height: 65px;
  margin-top: 2px;
  border: 1px solid #7f9db9;
  background: #fff;
}
.lb ul { flex: 1; line-height: 10px; padding-top: 1px; }
.lb li { padding-left: 2px; white-space: nowrap; height: 10px; }
.lb li[aria-selected] { background: #316ac5; color: #fff; }
.sb {
  width: 15px;
  display: flex;
  flex-direction: column;
  justify-content: space-between;
  padding: 1px;
  color: #c6c3b5;
  background: #f8f7f2;
}
.sb .s { width: 13px; height: 13px; padding: 2px; background: #efede3; }
.apply { display: flex; justify-content: space-between; }
.acol { display: flex; flex-direction: column; align-items: flex-start; padding-left: 8px; }
.ap { width: 113px; height: 18px; margin-top: 1px; }
.mini { width: 55px; height: 77px; margin: 3px 37px 0 0; }
.btn {
  height: 17px;
  border: 1px solid #1c4478;
  border-radius: 3px;
  background: linear-gradient(#fff, #eceae2);
  line-height: 14px;
}
.popt { width: 73px; margin: 29px 0 0 -6px; }
.dialog footer { display: flex; gap: 7px; padding: 6px 0 0 1px; }
.dialog footer .btn { width: 63px; }
.dialog footer .ok { margin-left: auto; box-shadow: inset 0 0 0 1px #8fb0ee; }
.dialog footer .cancel { width: 61px; }

.hscroll { height: 14px; flex: none; display: flex; padding-right: 17px; background: #e9effc; }
.views { display: flex; width: 73px; background: #ece9d8; }
.views svg { width: 14px; height: 14px; }
.views .on { background: #f8b05c; border: 1px solid #24458c; }
.hthumb {
  flex: 1;
  border: 1px solid #a4bdf2;
  border-radius: 2px;
  background: linear-gradient(#d3e0ff, #b6cbfa);
}

.drawbar { height: 24px; padding-top: 1px; background: linear-gradient(#d3e2fc, #b5cff9); }
.tb-draw { width: 540px; padding-left: 5px; }
.tb-draw .t { margin-left: 4px; }

.status {
  height: 18px;
  flex: none;
  display: flex;
  align-items: center;
  padding-left: 41px;
  background: #ece9d8;
  border-top: 1px solid #fbfaf4;
}
.p1 { width: 52px; }
.p2 { width: 41px; }
.p3 { width: 38px; }
.p4 { width: 129px; padding-left: 4px; border-left: 1px solid #c8c5b4; }
.p5 { width: 36px; }
.p6 { width: 29px; }
.m, .lang, .e { height: 14px; line-height: 13px; border: 1px solid #d8d5c5; text-align: center; }
.m { width: 26px; margin-right: 2px; color: #aca899; }
.lang { width: 53px; }
.e { width: 31px; margin-left: 3px; }

.taskbar {
  height: 24px;
  flex: none;
  display: flex;
  align-items: center;
  color: #fff;
  background: linear-gradient(#4a8cf4, #2661dc 15%, #245cda 80%, #1b48b5);
}
.start {
  width: 80px;
  height: 24px;
  display: flex;
  align-items: center;
  gap: 5px;
  padding-left: 10px;
  color: #fff;
  font: italic 16px/22px "Noto Sans CJK SC", sans-serif;
  border-radius: 0 9px 9px 0;
  background: linear-gradient(#6cb963, #3a933a 20%, #3d9c3d 75%, #2a702a);
}
.start svg { width: 16px; height: 16px; }
.quick { display: flex; align-items: center; width: 118px; padding-left: 4px; font-size: 14px; }
.quick button { width: 19px; display: flex; justify-content: center; }
.quick .big { width: 34px; height: 20px; align-items: center; background: #2a5fd0; margin-right: 4px; }
.quick span { margin-left: 4px; line-height: 12px; padding-bottom: 6px; }
.tasks {
  flex: 1;
  display: grid;
  grid-template-columns: repeat(8, 1fr);
  gap: 2px;
}
.tasks button {
  height: 20px;
  display: flex;
  align-items: center;
  gap: 2px;
  padding-left: 7px;
  color: #fff;
  font-size: 11px;
  border-radius: 2px;
  background: linear-gradient(#5c9afb, #3c7ef2 20%, #3a78ec);
}
.tasks .on { background: #1e50b8; }
.ime { display: flex; align-items: center; gap: 6px; padding: 0 7px 0 8px; }
.ime span { background: #e01818; font: bold 12px/14px "Noto Sans CJK SC", sans-serif; }
.ime svg { width: 12px; height: 14px; }
.tray {
  height: 24px;
  display: flex;
  align-items: center;
  padding: 0 11px 0 0;
  background: linear-gradient(#34b8f7, #139ee9 20%, #1495e4 80%, #0d79c4);
}
.tray time { margin-left: 6px; font: 10px/14px "Liberation Sans", sans-serif; }

.wm {
  position: absolute;
  right: 48px;
  bottom: 20px;
  width: 150px;
  color: #fff;
  opacity: 0.85;
  text-shadow: 0 0 2px #8c9cc0;
  pointer-events: none;
}
.wm-row { display: flex; align-items: flex-end; justify-content: space-between; height: 50px; }
.wm b { font: bold 33px/30px "Liberation Sans", sans-serif; }
.wm strong { font: bold 26px/31px "Noto Sans CJK SC", sans-serif; }
.paw { position: relative; }
.paw svg { width: 40px; height: 50px; filter: drop-shadow(0 0 1px #8c9cc0); }
.paw span {
  position: absolute;
  left: 8px;
  bottom: 5px;
  color: #8fabe0;
  text-shadow: none;
  font: bold 20px/20px "Liberation Sans", sans-serif;
}
.wm-url { font: 18px/20px "Liberation Sans", sans-serif; }
.ball {
  position: absolute;
  right: -20px;
  bottom: 36px;
  width: 36px;
  height: 36px;
  border: 2px solid #d7efda;
  border-radius: 50%;
  color: #fff;
  font: bold 11px/32px "Liberation Sans", sans-serif;
  background: radial-gradient(circle at 40% 30%, #6cdb75, #27a53b);
}
```
